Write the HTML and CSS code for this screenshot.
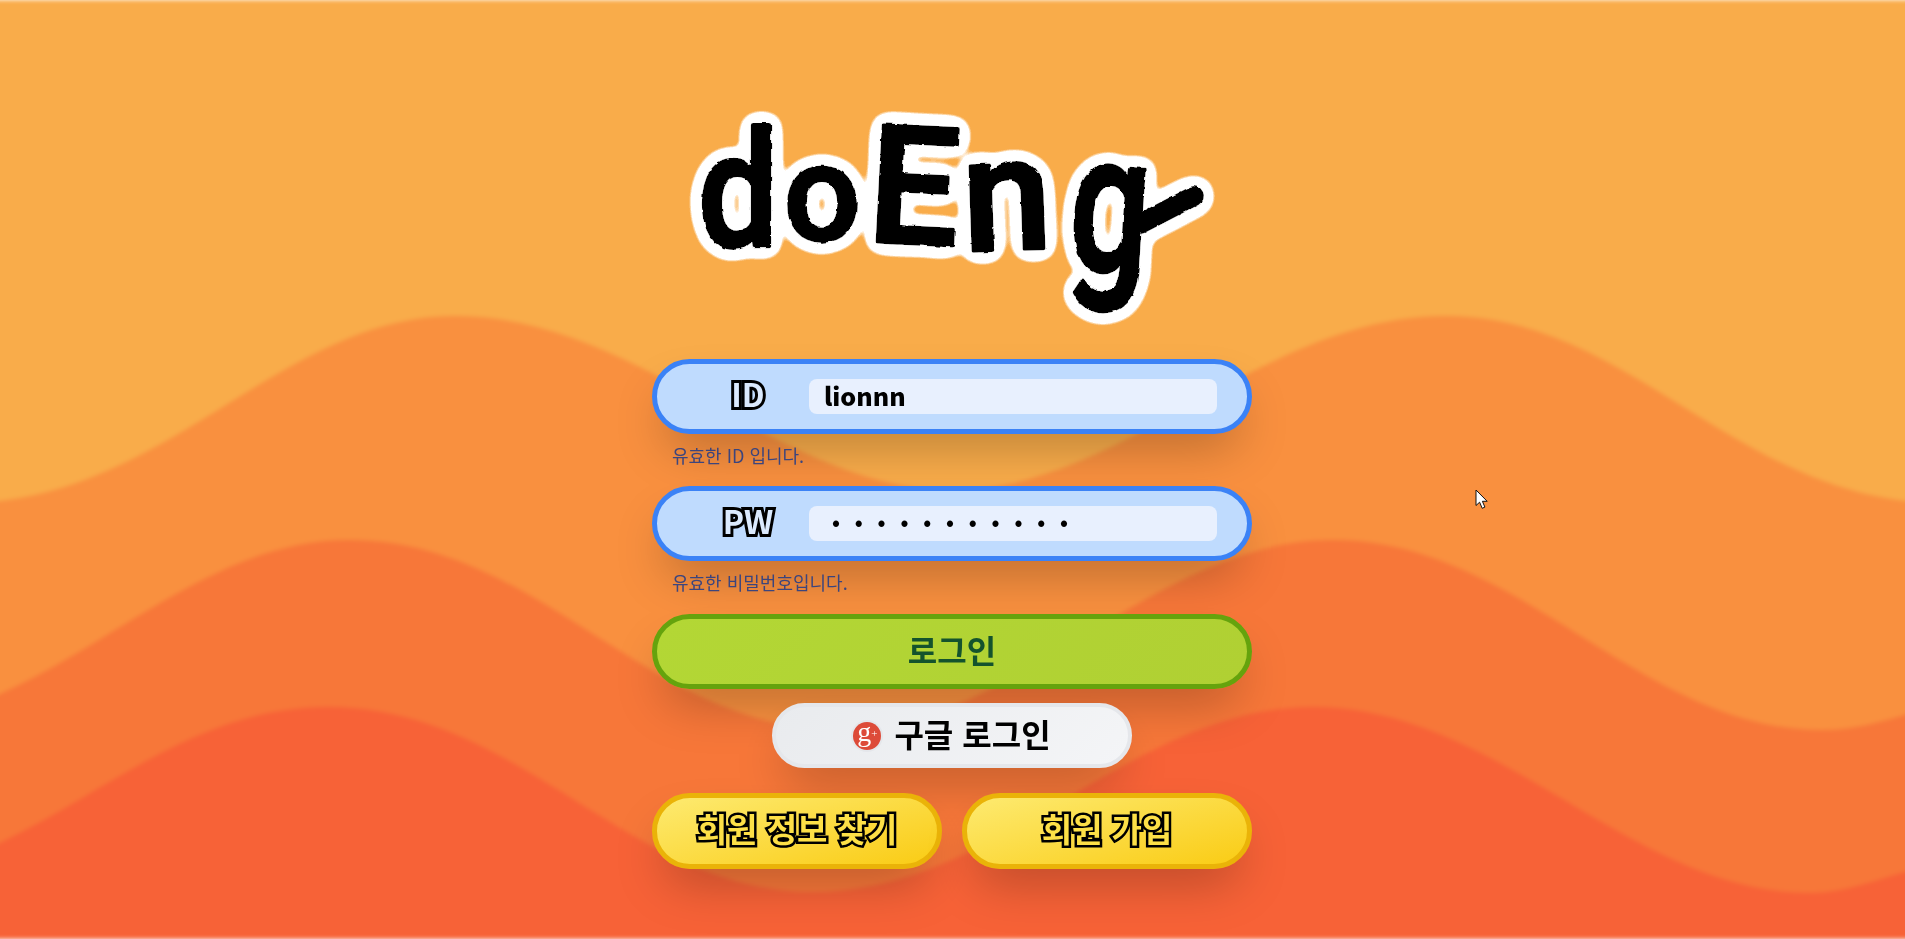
FILE: index.html
```html
<!DOCTYPE html>
<html lang="ko">
<head>
<meta charset="utf-8">
<title>doEng</title>
<link rel="stylesheet" href="styles.css">
</head>
<body>
<svg class="waves" viewBox="0 0 1905 939" preserveAspectRatio="none" aria-hidden="true">
  <rect class="w0" x="-40" y="0" width="1985" height="939"/>
  <path class="w1" d="M-40,507 L0,501 C180,480 290,316 455,316 C640,316 780,490 952,490 C1125,490 1260,316 1446,316 C1620,316 1725,480 1905,501 L1945,507 V939 H-40Z"/>
  <path class="w2" d="M-40,712 L0,694 C120,640 220,540 349,540 C540,540 650,730 838,730 C1020,730 1150,540 1333,540 C1520,540 1640,730 1822,730 C1855,730 1880,722 1905,715 L1945,700 V939 H-40Z"/>
  <path class="w3" d="M-40,860 L0,843 C110,790 200,707 328,707 C520,707 630,892 813,892 C1000,892 1130,707 1313,707 C1500,707 1630,893 1810,893 C1845,893 1875,880 1905,872 L1945,860 V939 H-40Z"/>
</svg>

<main class="page">
  <svg class="logo" viewBox="0 0 600 246" role="img" aria-label="doEng">
    <defs>
      <filter id="sticker" x="-10%" y="-15%" width="120%" height="130%">
        <feTurbulence type="fractalNoise" baseFrequency="0.12" numOctaves="2" seed="4" result="noise"/>
        <feDisplacementMap in="SourceGraphic" in2="noise" scale="3" xChannelSelector="R" yChannelSelector="G" result="rough"/>
        <feGaussianBlur in="rough" stdDeviation="7.5" result="soft"/>
        <feComponentTransfer in="soft" result="fat">
          <feFuncA type="linear" slope="30" intercept="-1"/>
        </feComponentTransfer>
        <feFlood flood-color="#ffffff"/>
        <feComposite in2="fat" operator="in" result="halo"/>
        <feMerge>
          <feMergeNode in="halo"/>
          <feMergeNode in="rough"/>
        </feMerge>
      </filter>
    </defs>
    <g filter="url(#sticker)" class="logo-ink">
      <text transform="translate(46 146) scale(0.88 1)" font-size="162">d</text>
      <text transform="translate(132 140) scale(1 1)" font-size="134">o</text>
      <text transform="translate(214 141) rotate(3) scale(0.98 1)" font-size="164">E</text>
      <text transform="translate(312 151) rotate(-2) scale(1 1)" font-size="160">n</text>
      <text transform="translate(414 168) rotate(4) scale(0.72 1)" font-size="196">g</text>
      <line class="logo-swash" x1="488" y1="124" x2="542" y2="96"/>
    </g>
  </svg>

  <label class="pill pill-blue">
    <span class="pill-label">ID</span>
    <input class="pill-input" type="text" value="lionnn">
  </label>
  <p class="hint">유효한 ID 입니다.</p>

  <label class="pill pill-blue">
    <span class="pill-label">PW</span>
    <input class="pill-input pill-secret" type="password" value="aaaaaaaaaaa">
  </label>
  <p class="hint hint-last">유효한 비밀번호입니다.</p>

  <button class="pill pill-login" type="button">로그인</button>

  <button class="google" type="button">
    <span class="gplus"><span class="gplus-g">g</span><span class="gplus-p">+</span></span>
    구글 로그인
  </button>

  <div class="pair">
    <button class="pill pill-yellow" type="button">회원 정보 찾기</button>
    <button class="pill pill-yellow" type="button">회원 가입</button>
  </div>
</main>

<svg class="cursor" width="14" height="21" viewBox="0 0 14 21" aria-hidden="true">
  <path d="M1 1 V16.5 L4.6 13.2 L7.2 19.3 L9.9 18.1 L7.4 12.3 H12.2 Z" fill="#fff" stroke="#111" stroke-width="1"/>
</svg>
</body>
</html>
```

FILE: styles.css
```css
* { box-sizing: border-box; }

html, body {
  margin: 0;
  height: 100%;
}

body {
  position: relative;
  overflow: hidden;
  padding-right: 1px;
  background: #fff;
  font-family: "Noto Sans CJK KR", "Noto Sans", sans-serif;
}

.waves {
  position: absolute;
  inset: 0;
  width: 100%;
  height: 100%;
  overflow: visible;
  filter: blur(2px);
}

.w0 { fill: #f9ac4a; }
.w1 { fill: #f9903f; }
.w2 { fill: #f77739; }
.w3 { fill: #f76237; }

.page {
  position: relative;
  width: 600px;
  margin: 0 auto;
  padding-top: 100px;
  display: flex;
  flex-direction: column;
  align-items: stretch;
}

.logo {
  display: block;
  width: 600px;
  height: 246px;
  margin-bottom: 13px;
  overflow: visible;
}

.logo-ink text {
  font-family: Roboto, sans-serif;
  font-weight: 500;
  fill: #000;
  stroke: #000;
  stroke-width: 4px;
  stroke-linejoin: round;
}

.logo-ink .logo-swash {
  stroke: #000;
  stroke-width: 20px;
  stroke-linecap: round;
}

.pill {
  display: flex;
  align-items: center;
  width: 100%;
  height: 75px;
  border: 5px solid;
  border-radius: 38px;
  box-shadow: 0 25px 50px -12px rgba(0, 0, 0, 0.25);
  font-family: inherit;
  font-weight: 700;
}

.pill-blue {
  padding: 0 30px;
  background: #bfdbfe;
  border-color: #3b82f6;
}

.pill-label {
  width: 122px;
  flex: none;
  padding-bottom: 7px;
  text-align: center;
  font-size: 32px;
  line-height: 1;
  color: #dbeafe;
  -webkit-text-stroke: 6px #000;
  paint-order: stroke fill;
  text-shadow: 1px 2px 0 #000;
}

.pill-input {
  flex: 1;
  min-width: 0;
  height: 35px;
  padding: 0 16px 4px 15px;
  border: 0;
  border-radius: 8px;
  outline: 0;
  background: #e8f0fe;
  font-family: inherit;
  font-size: 25px;
  font-weight: 900;
  color: #000;
}

.pill-secret {
  padding: 0 0 4px 23px;
  font-size: 20px;
  letter-spacing: 14.8px;
}

.hint {
  margin: 0;
  height: 52px;
  padding: 9px 0 0 20px;
  font-size: 18px;
  line-height: 24px;
  color: #1e3a8a;
  opacity: 0.85;
}

.hint-last { height: 53px; }

.pill-login {
  justify-content: center;
  padding: 0 0 6px;
  background: linear-gradient(135deg, #b3d735, #b0d033);
  border-color: #65a30d;
  color: #14532d;
  font-size: 32px;
}

.google {
  align-self: center;
  display: flex;
  align-items: center;
  justify-content: center;
  gap: 13px;
  width: 360px;
  height: 65px;
  margin: 14px 0 25px;
  padding: 0 0 6px;
  border: 4px solid #e5e7eb;
  border-radius: 33px;
  background: linear-gradient(135deg, #e9ebee, #f4f5f7);
  box-shadow: 0 25px 50px -12px rgba(0, 0, 0, 0.25);
  font-family: inherit;
  font-size: 32px;
  font-weight: 700;
  color: #000;
}

.gplus {
  display: flex;
  align-items: center;
  justify-content: center;
  width: 28px;
  height: 28px;
  margin-top: 6px;
  border-radius: 50%;
  background: #dd4b39;
  box-shadow: 0 0 0 2px #e5e7eb;
  font-family: "Liberation Serif", serif;
  color: #fff;
  line-height: 1;
}

.gplus-g { font-size: 28px; font-weight: 400; margin-top: -7px; }
.gplus-p { font-size: 11px; font-weight: 400; margin-top: -4px; }

.pair {
  display: flex;
  gap: 20px;
}

.pill-yellow {
  flex: 1;
  justify-content: center;
  height: 76px;
  padding: 0 0 6px;
  background: linear-gradient(165deg, #fdea70, #facc15);
  border-color: #eab308;
  color: #fde047;
  font-size: 33px;
  -webkit-text-stroke: 5px #000;
  paint-order: stroke fill;
  text-shadow: 1px 2px 0 #000;
}

.cursor {
  position: absolute;
  left: 1475px;
  top: 489px;
}
```
